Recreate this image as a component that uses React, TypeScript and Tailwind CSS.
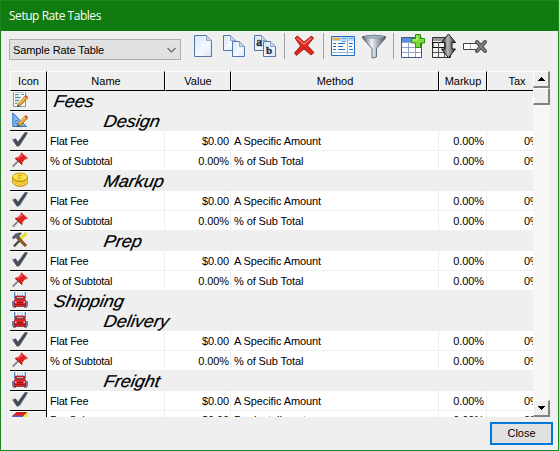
import React from "react";

const ui = "font-['Liberation_Sans',Arial,sans-serif] text-[11px] leading-none whitespace-nowrap";

function Check() {
  return (
    <svg width="16" height="16" viewBox="0 0 16 16">
      <path d="M.6 7.7 L3.6 6.8 L6 10 L12.8 .6 L15.4 .2 L14.8 2.2 L7.6 13.6 L5 14.4 Z" fill="#434b56" stroke="#59616c" strokeWidth=".6" />
    </svg>
  );
}

function Pin() {
  return (
    <svg width="16" height="16" viewBox="0 0 16 16">
      <path d="M.7 14.6 L6 9.3" stroke="#7d8790" strokeWidth="1.8" />
      <path d="M3 6.3 L5.6 5.5 L9 2.7 L9.3 .6 L15.6 6.2 L13.2 7 L10.3 10 L10 12.8 Z" fill="#dc2323" stroke="#dc2323" strokeWidth=".6" />
      <path d="M6 6.2 L10.2 3 M10 1.2 L15 5.8" stroke="#f97878" strokeWidth="1" />
      <path d="M3.3 6.6 L10 12.4" stroke="#b31414" />
    </svg>
  );
}

function Pencil() {
  return (
    <g>
      <path d="M5.3 14.6 L6.5 11 L13.5 3.6 L15.8 5.9 L9 13.2 Z" fill="#eca02c" stroke="#8a5a1c" strokeWidth=".6" />
      <path d="M7.2 11.2 L13.5 4.7" stroke="#ffd56a" />
      <path d="M12.7 4.4 L14 3 L16 5.3 L14.8 6.5 Z" fill="#d9474a" />
      <path d="M5.2 14.8 L6 12.6 L7.4 14 Z" fill="#333" />
    </g>
  );
}

function Note() {
  return (
    <svg width="16" height="16" viewBox="0 0 16 16">
      <path d="M1.5 0 V14.5 H13.5 V0" fill="#f5fafb" stroke="#7f9dae" />
      <path d="M3 2.5 H7 M9 2.5 H12 M3 5.5 H9 M3 8.5 H7 M3 11.5 H5" stroke="#5f9690" />
      <path d="M3 .5 H12 M3 4 H7 M3 7 H8 M3 10 H6" stroke="#a9c6d9" />
      <Pencil />
    </svg>
  );
}

function Design() {
  return (
    <svg width="16" height="16" viewBox="0 0 16 16">
      <path d="M.8 1 V14.5 H14.5 Z M4 8 V11.5 H7.7 Z" fill="#7eb4e8" stroke="#3475c8" fillRule="evenodd" />
      <Pencil />
    </svg>
  );
}

function Coins() {
  return (
    <svg width="16" height="16" viewBox="0 0 16 16">
      <path d="M.5 5 V10.5 Q3 14.6 8.5 14.5 Q14 14.3 15.5 11 V5" fill="#d7a713" stroke="#b58a0d" strokeWidth=".7" />
      <path d="M.8 8 Q3 11.6 8 11.5 Q13 11.5 15.2 8 M.8 10.2 Q4 13.3 8 13.2 Q13 13 15.2 10" fill="none" stroke="#ffe45d" />
      <ellipse cx="8" cy="5" rx="7.4" ry="4" fill="#ffe452" stroke="#c99a12" />
      <path d="M5.5 3.5 Q8 2.3 10.3 3.6 M7 3 V6.8 M10 5.4 Q8.5 7 5.6 6.4" fill="none" stroke="#d9a71b" />
    </svg>
  );
}

function Tools() {
  return (
    <svg width="16" height="16" viewBox="0 0 16 16">
      <path d="M2 14.5 L9.5 6.5" stroke="#9a9a20" strokeWidth="2.5" />
      <path d="M8.5 7 L14.5 1.2" stroke="#e9dc24" strokeWidth="3" />
      <path d="M2 14.3 L7 9" stroke="#444d4c" strokeWidth="2" />
      <path d="M5.5 5.5 L14 14" stroke="#643712" strokeWidth="3" />
      <path d="M6 6 L14 14" stroke="#ad6929" strokeWidth="1.2" />
      <path d="M.3 5.5 L3.5 2 L8.5 .7 L9.3 2 L7 3.5 L7.6 5.3 L5.5 7 L4 5 L1.7 7 Z" fill="#566470" stroke="#303941" strokeWidth=".6" />
    </svg>
  );
}

function Truck() {
  return (
    <svg width="16" height="16" viewBox="0 0 16 16">
      <path d="M2.5 0 H13.5 V6 H2.5 Z" fill="#b9d6f5" />
      <path d="M2.5 0 V6 M13.5 0 V6" stroke="#5d87bd" />
      <path d="M4.5 0 V4 M7 0 V4 M9 0 V4 M11.5 0 V4" stroke="#fff" />
      <path d="M0 9 H3 V14.5 H0 Z M13 9 H16 V14.5 H13 Z" fill="#6f7aa0" />
      <path d="M3.6 4 H12.4 L13.4 8 V14.5 H2.6 V8 Z" fill="#e02226" stroke="#941219" strokeWidth=".7" />
      <path d="M4.3 5 H11.7 L12.2 7.5 H3.8 Z" fill="#7a4650" />
      <path d="M5 5.5 H11" stroke="#f0c0c0" strokeWidth=".8" />
      <path d="M5 10.5 H11" stroke="#8a141b" />
      <path d="M3 12.5 H13" stroke="#a01820" />
      <path d="M3 9.5 H4.5 V11 H3 Z M11.5 9.5 H13 V11 H11.5 Z" fill="#ffd2a6" />
      <path d="M1 15 H4 M12 15 H15" stroke="#343a4c" />
    </svg>
  );
}

function Box() {
  return (
    <svg width="16" height="16" viewBox="0 0 16 16">
      <path d="M.5 4 L5 0 H15 L11 4 V15 H.5 Z" fill="#ef1616" stroke="#444" strokeWidth=".7" />
      <path d="M11.3 4 L15.4 0 V12 L11.3 15 Z" fill="#f5e61d" />
      <path d="M.5 3.5 H11 V15 H.5 Z" fill="#5a62c5" />
    </svg>
  );
}

type Row = { icon: () => React.ReactElement; group?: string; sub?: boolean; cells?: string[]; last?: boolean };

const flat: Row = { icon: Check, cells: ["Flat Fee", "$0.00", "A Specific Amount"] };
const pct: Row = { icon: Pin, cells: ["% of Subtotal", "0.00%", "% of Sub Total"] };

const rows: Row[] = [
  { icon: Note, group: "Fees" },
  { icon: Design, group: "Design", sub: true },
  flat,
  pct,
  { icon: Coins, group: "Markup", sub: true },
  flat,
  pct,
  { icon: Tools, group: "Prep", sub: true },
  flat,
  pct,
  { icon: Truck, group: "Shipping" },
  { icon: Truck, group: "Delivery", sub: true },
  flat,
  pct,
  { icon: Truck, group: "Freight", sub: true },
  flat,
  { icon: Box, cells: ["Per Sales", "$0.00", "Per Installment"], last: true },
];

const cols = "grid grid-cols-[37px_118px_66px_208px_48px_62px]";

function Header({ text, pad = "" }: { text: string; pad?: string }) {
  return (
    <div className={`${ui} ${pad} flex h-5 items-center justify-center border-t border-r border-b border-l border-t-white border-r-black border-b-black border-l-white`}>
      {text}
    </div>
  );
}

function GridRow({ row }: { row: Row }) {
  const Icon = row.icon;
  const cell = `h-[19px] border-r border-[#efefef] bg-white flex items-center ${row.last ? "pb-px" : "pt-[2px]"}`;
  return (
    <div className={`${cols} h-5 shrink-0`}>
      <div className="h-5 border-r border-b border-black pt-px pl-0.5 shadow-[inset_0_1px_0_#fff]">
        <Icon />
      </div>
      {row.group ? (
        <div className={`${row.sub ? "pl-[57px]" : "pl-[7px]"} col-span-5 flex h-5 items-center pt-px`}>
          <span className="origin-left -skew-x-[10deg] scale-x-[1.06] font-['Liberation_Sans',Arial,sans-serif] text-[17px] leading-none italic [-webkit-text-stroke:0.2px_#000]">
            {row.group}
          </span>
        </div>
      ) : (
        <>
          <div className={`${cell} ${ui} pl-[3px] tracking-[-0.25px]`}>{row.cells![0]}</div>
          <div className={`${cell} ${ui} justify-end pr-px tracking-[-0.1px]`}>{row.cells![1]}</div>
          <div className={`${cell} ${ui} pl-[3px] tracking-[-0.1px]`}>{row.cells![2]}</div>
          <div className={`${cell} ${ui} justify-end pr-0.5 tracking-[-0.1px]`}>0.00%</div>
          <div className={`${cell} ${ui} pl-[37px]`}>0%</div>
        </>
      )}
    </div>
  );
}

function Page({ x, y, w, h }: { x: number; y: number; w: number; h: number }) {
  return (
    <g transform={`translate(${x} ${y})`}>
      <path d={`M.5 .5 H${w - 5.5} L${w - 0.5} 5.5 V${h - 0.5} H.5 Z`} fill="url(#sheet)" stroke="#5577a8" />
      <path d={`M${w - 5.5} .5 V5.5 H${w - 0.5}`} fill="#c8d8e9" stroke="#7e9bc1" strokeWidth=".8" />
    </g>
  );
}

function Toolbar() {
  return (
    <svg width="300" height="30" viewBox="190 32 300 30">
      <defs>
        <linearGradient id="sheet" x1="0" y1="0" x2="1" y2="1">
          <stop offset="0" stopColor="#d5e6f8" />
          <stop offset=".6" stopColor="#f4f9ff" />
          <stop offset="1" stopColor="#d3e4f7" />
        </linearGradient>
        <linearGradient id="steel">
          <stop offset="0" stopColor="#515c6b" />
          <stop offset=".4" stopColor="#eef3f7" />
          <stop offset="1" stopColor="#495362" />
        </linearGradient>
        <linearGradient id="dark">
          <stop offset="0" stopColor="#303030" />
          <stop offset=".45" stopColor="#b6b6b6" />
          <stop offset="1" stopColor="#303030" />
        </linearGradient>
      </defs>
      <Page x={194} y={35} w={18} h={22} />
      <Page x={223} y={35} w={13} h={16} />
      <Page x={232} y={41} w={13} h={16} />
      <Page x={254} y={35} w={13} h={16} />
      <text x="256.3" y="46" fontSize="12" fontWeight="700" fontFamily="Liberation Serif, serif" fill="#25303e" stroke="#25303e" strokeWidth=".4">a</text>
      <Page x={263} y={41} w={13} h={16} />
      <text x="266" y="54" fontSize="11" fontWeight="700" fontFamily="Liberation Serif, serif" fill="#25303e" stroke="#25303e" strokeWidth=".4">b</text>
      <path d="M284.5 33 V59 M323.5 33 V59 M393.5 33 V59" stroke="#a0a0a0" />
      <path d="M295 38 L297.5 36 L304 42 L311.5 36 L313.5 38 L307.5 45.5 L314 52.5 L311 55 L304 49 L296.5 55.5 L294.5 53 L300.5 46 Z" fill="#dc2820" stroke="#a91713" strokeWidth=".9" />
      <path d="M297 38.2 L304 44.2 L311.3 38" fill="none" stroke="#f58278" strokeWidth="1.2" />

      <path d="M331.5 36.5 H354.5 V55.5 H331.5 Z" fill="#fff" stroke="#1f6fc0" />
      <path d="M332 37 H354 V41 H332 Z" fill="#bddcf7" />
      <path d="M333 39 H340" stroke="#ffa632" strokeWidth="2.4" />
      <path d="M341.5 38.5 H346 M349 38.5 H353 M341.5 41.5 H346" stroke="#62a5df" />
      <path d="M347.5 37 V55 M332 52.5 H354" stroke="#8fbce7" />
      <path d="M333 43.5 H336 M338 43.5 H345 M333 46.5 H336 M338 46.5 H343 M333 49.5 H336 M338 49.5 H345 M349 43.5 H353 M349 46.5 H352 M349 49.5 H353" stroke="#286fbd" />

      <path d="M362.5 36.5 Q374 34 385.5 36.5 V38 L376.5 48.5 V57 L372 58 V48.5 L362.5 38 Z" fill="url(#steel)" stroke="#566170" strokeWidth=".9" />
      <ellipse cx="374" cy="37" rx="10" ry="1.4" fill="#a8b5c4" stroke="#707b8b" strokeWidth=".5" />

      <path d="M401.5 37.5 H421.5 V57.5 H401.5 Z" fill="#fff" stroke="#48558b" />
      <path d="M402 38 H421 V42 H402 Z" fill="#5a91df" />
      <path d="M402 42.5 H421 M402 47.5 H421 M402 52.5 H421 M408.5 42 V57 M415.5 42 V57" stroke="#92a3cd" />
      <path d="M415.5 34.5 H420.5 V38.5 H424.5 V43 H420.5 V47.5 H415.5 V43 H411.5 V38.5 H415.5 Z" fill="#7ddb38" stroke="#2c8d13" />
      <path d="M417 36 V40 H413" fill="none" stroke="#ccf8a0" />

      <path d="M432.5 37.5 H450.5 V57.5 H432.5 Z" fill="#f1f1f1" stroke="#333" />
      <path d="M433 38 H450 V41 H433 Z" fill="#999" />
      <path d="M433 42.5 H450 V47.5 H433 Z" fill="none" stroke="#111" />
      <path d="M433 52.5 H450 M438.5 42 V57 M444.5 42 V57" stroke="#555" />
      <path d="M448.5 34 L455.5 42.5 H452 V49 H455.5 L448.5 57.8 L441.5 49 H445 V42.5 H441.5 Z" fill="url(#dark)" stroke="#171717" />

      <path d="M463.5 43.5 H480.5 V49.5 H463.5 Z" fill="#fff" stroke="#444" />
      <path d="M470.5 44 V49" stroke="#aaa" />
      <path d="M477 42 L485 51 M485 42 L477 51" stroke="#444" strokeWidth="4" strokeLinecap="round" />
      <path d="M477 42 L485 51 M485 42 L477 51" stroke="#808080" strokeWidth="2" strokeLinecap="round" />
    </svg>
  );
}

function ScrollButton({ dir }: { dir?: "up" | "down" }) {
  return (
    <div className="flex h-[17px] w-[17px] shrink-0 items-center justify-center border-t border-r-2 border-b-2 border-l border-t-white border-r-[#828282] border-b-[#828282] border-l-white bg-[#efefef]">
      {dir && (
        <svg width="7" height="4" viewBox="0 0 7 4" shapeRendering="crispEdges">
          <path d={dir === "up" ? "M3 0h1v1h1v1h1v1h1v1H0V3h1V2h1V1h1z" : "M0 0h7v1H6v1H5v1H4v1H3V3H2V2H1V1H0z"} fill="#000" />
        </svg>
      )}
    </div>
  );
}

export default function App() {
  return (
    <div className="flex h-[451px] w-[559px] flex-col overflow-hidden border border-[#218321] bg-[#efefef] text-black">
      <div className="flex h-[30px] shrink-0 items-center bg-[#107c10] pl-2 font-['Open_Sans','Noto_Sans',sans-serif] text-[12px] leading-none tracking-[-0.46px] text-white">
        Setup Rate Tables
      </div>
      <div className="flex h-10 shrink-0 pl-2">
        <div className={`${ui} mt-2 flex h-[21px] w-[172px] items-center justify-between border border-[#adadad] bg-[#e1e1e1] pr-1 pl-[3px]`}>
          <span className="pt-px tracking-[-0.1px]">Sample Rate Table</span>
          <svg width="9" height="6" viewBox="0 0 9 6">
            <path d="M.5 1 L4.5 5 L8.5 1" fill="none" stroke="#606060" strokeWidth="1.1" />
          </svg>
        </div>
        <div className="ml-[9px] pt-px">
          <Toolbar />
        </div>
      </div>
      <div className="ml-[9px] flex h-[346px] w-[540px] shrink-0">
        <div className="flex w-[523px] flex-col overflow-hidden">
          <div className={`${cols} h-5 shrink-0`}>
            <Header text="Icon" />
            <Header text="Name" />
            <Header text="Value" />
            <Header text="Method" />
            <Header text="Markup" />
            <Header text="Tax" pad="pr-[2px]" />
          </div>
          {rows.map((row, i) => (
            <GridRow key={i} row={row} />
          ))}
        </div>
        <div className="flex w-[17px] flex-col bg-[#f7f7f7]">
          <ScrollButton dir="up" />
          <ScrollButton />
          <div className="flex-1" />
          <ScrollButton dir="down" />
        </div>
      </div>
      <div className="flex justify-end pt-[5px] pr-[5px]">
        <button className={`${ui} h-[23px] w-[63px] border-2 border-[#0078d7] bg-[#e1e1e1]`}>Close</button>
      </div>
    </div>
  );
}
